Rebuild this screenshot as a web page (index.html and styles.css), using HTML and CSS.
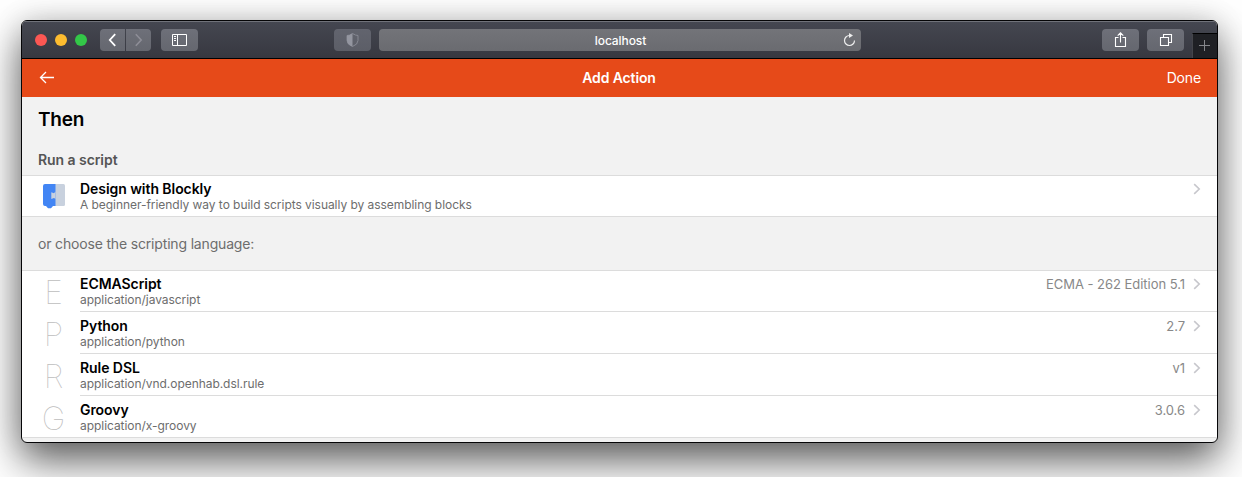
FILE: index.html
```html
<!DOCTYPE html>
<html lang="en">
<head>
<meta charset="utf-8">
<title>Add Action</title>
<link rel="stylesheet" href="styles.css">
</head>
<body>
<div class="window">
  <header class="toolbar">
    <div class="lights"><i class="light red"></i><i class="light yellow"></i><i class="light green"></i></div>
    <div class="nav-buttons">
      <span class="tool nav"><svg width="25" height="22" viewBox="0 0 25 22"><path d="M15.200 5.200 9.800 11l5.400 5.800" stroke="#fff" stroke-width="1.800"/></svg></span>
      <span class="tool nav forward"><svg width="25" height="22" viewBox="0 0 25 22"><path d="M9.800 5.200 15.200 11l-5.400 5.800" stroke="#8e8e97" stroke-width="1.600"/></svg></span>
    </div>
    <span class="tool sidebar"><svg width="37" height="22" viewBox="0 0 37 22"><path d="M11.500 5.500h14v11h-14zM16.500 5.500v11M13 7.500h2M13 9.500h2M13 11.500h2" stroke="#fff"/></svg></span>
    <span class="tool shield"><svg width="37" height="22" viewBox="0 0 37 22"><path d="M18.500 4.500q3 2 5.500 2v5q0 4-5.500 6-5.500-2-5.500-6v-5q2.500 0 5.500-2z" stroke="#868892"/><path d="M18.500 4.500v13q-5.500-2-5.500-6v-5q2.500 0 5.500-2z" fill="#9496a0"/></svg></span>
    <div class="address"><span class="host">localhost</span>
      <svg class="reload" width="14" height="14" viewBox="0 0 14 14"><path d="M6.500 2.500a5 5 0 1 0 5 5" stroke="#eee" stroke-width="1.200"/><path d="M6 0v5l4-2.500z" fill="#eee"/></svg>
    </div>
    <span class="tool share"><svg width="37" height="22" viewBox="0 0 37 22"><path d="M16.500 8.500h-3v9h10v-9h-3M18.500 13.500V4M15.700 6.700l2.800-2.900 2.800 2.900" stroke="#fff" stroke-width="1.100"/></svg></span>
    <span class="tool tabs"><svg width="37" height="22" viewBox="0 0 37 22"><path d="M13.500 8.500h8v8h-8zM16.500 8.500v-3h8v8h-3" stroke="#fff" stroke-width="1.100"/></svg></span>
    <span class="new-tab"><svg width="24" height="24" viewBox="0 0 24 24"><path d="M11.500 6v11M6 11.500h11" stroke="#85868a"/></svg></span>
  </header>
  <nav class="navbar">
    <svg class="back" width="17" height="14" viewBox="0 0 17 14"><path d="M16 6.500H3M8 1 2.500 6.500 8 12" stroke="#fff" stroke-width="1.300"/></svg>
    <span class="page-title">Add Action</span>
    <span class="done">Done</span>
  </nav>
  <main class="content">
    <h1 class="heading">Then</h1>
    <h2 class="block-title">Run a script</h2>
    <ul class="list">
      <li class="item">
        <span class="media"><svg class="blockly" width="22" height="25" viewBox="0 0 22 25"><path d="M12 0h8.500Q22 0 22 1.500v19q0 1.500-1.500 1.500H12z" fill="#c8d1de"/><path d="M2 0H12.500v22H10l-2 2.200H5L3 22H2Q0 22 0 20V2Q0 0 2 0z" fill="#4285f4"/><path d="M12.500 7.500v7.500l-1.500-1-2.700 1V8.300l2.700 1z" fill="#c8d1de"/></svg></span>
        <div class="inner"><div class="text"><div class="title">Design with Blockly</div><div class="sub">A beginner-friendly way to build scripts visually by assembling blocks</div></div><span class="after"></span><svg class="chev" width="8" height="12" viewBox="0 0 8 12"><path d="m1.200 1.200 5 4.800-5 4.800"/></svg></div>
      </li>
    </ul>
    <p class="note">or choose the scripting language:</p>
    <ul class="list languages">
      <li class="item">
        <span class="media letter">E</span>
        <div class="inner"><div class="text"><div class="title">ECMAScript</div><div class="sub">application/javascript</div></div><span class="after">ECMA - 262 Edition 5.1</span><svg class="chev" width="8" height="12" viewBox="0 0 8 12"><path d="m1.200 1.200 5 4.800-5 4.800"/></svg></div>
      </li>
      <li class="item">
        <span class="media letter">P</span>
        <div class="inner"><div class="text"><div class="title">Python</div><div class="sub">application/python</div></div><span class="after">2.7</span><svg class="chev" width="8" height="12" viewBox="0 0 8 12"><path d="m1.200 1.200 5 4.800-5 4.800"/></svg></div>
      </li>
      <li class="item">
        <span class="media letter">R</span>
        <div class="inner"><div class="text"><div class="title">Rule DSL</div><div class="sub">application/vnd.openhab.dsl.rule</div></div><span class="after">v1</span><svg class="chev" width="8" height="12" viewBox="0 0 8 12"><path d="m1.200 1.200 5 4.800-5 4.800"/></svg></div>
      </li>
      <li class="item">
        <span class="media letter">G</span>
        <div class="inner"><div class="text"><div class="title">Groovy</div><div class="sub">application/x-groovy</div></div><span class="after">3.0.6</span><svg class="chev" width="8" height="12" viewBox="0 0 8 12"><path d="m1.200 1.200 5 4.800-5 4.800"/></svg></div>
      </li>
    </ul>
  </main>
</div>
</body>
</html>
```
FILE: styles.css
```css
* { box-sizing: border-box; }
html { background: #fff; }
body { margin: 0; padding: 20px 24px 34px 21px; height: 477px; overflow: hidden; font-family: Inter, "Liberation Sans", sans-serif; }
svg { display: block; fill: none; flex: none; }
.window { width: 1197px; height: 423px; border: 1px solid #050507; border-radius: 6px; overflow: hidden; background: #f2f2f2; box-shadow: 0 18px 40px rgba(0,0,0,.62), 0 0 30px rgba(0,0,0,.12); }
.toolbar { height: 38px; display: flex; align-items: flex-start; padding: 8px 0 0 13px; background: linear-gradient(#454751, #373840); border-bottom: 1px solid #000; box-shadow: inset 0 1px #70727a; }
.lights { display: flex; gap: 8px; padding-top: 5px; width: 65px; }
.light { width: 12px; height: 12px; border-radius: 50%; }
.red { background: #fc5753; }
.yellow { background: #fdbc2f; }
.green { background: #33c748; }
.nav-buttons { display: flex; gap: 1px; }
.tool { height: 22px; width: 37px; border-radius: 4px; background: linear-gradient(#6e7079, #65676f); flex: none; }
.nav { width: 25px; border-radius: 4px 0 0 4px; }
.forward { border-radius: 0 4px 4px 0; }
.sidebar { margin-left: 10px; }
.shield { margin-left: 136px; background: linear-gradient(#62646e, #5c5e67); }
.address { margin-left: 8px; width: 482px; height: 22px; border-radius: 4px; background: linear-gradient(#737479, #6a6b70); display: grid; grid-template-columns: 18px 1fr 18px; align-items: center; }
.host { grid-column: 2; padding: 2px 0 0 1px; text-align: center; color: #fff; font-size: 12px; font-weight: 500; line-height: 20px; letter-spacing: -.1px; }
.share { margin-left: 241px; }
.tabs { margin-left: 8px; }
.new-tab { width: 25px; height: 25px; margin: 4px 0 0 8px; background: #1f2024; border-top: 1px solid #000; border-left: 1px solid #44454a; }
.navbar { height: 38px; display: grid; grid-template-columns: 60px 1fr 60px; align-items: center; padding: 0 16px; background: #e64a19; color: #fff; font-size: 14px; }
.page-title { padding: 0 1px 2px 0; text-align: center; font-weight: 600; letter-spacing: -.12px; }
.done { padding-bottom: 2px; text-align: right; letter-spacing: -.15px; }
.content { height: 346px; overflow: hidden; }
.heading { margin: 0; padding: 10px 16px 0; height: 45px; font-size: 19px; line-height: 26px; font-weight: 600; letter-spacing: -.2px; color: #000; }
.block-title { margin: 0; padding: 10px 16px 0; height: 33px; font-size: 14px; line-height: 16px; font-weight: 600; letter-spacing: -.06px; color: #555; }
.list { margin: 0; padding: 0; list-style: none; background: #fff; border-top: 1px solid #dcdcdc; border-bottom: 1px solid #dcdcdc; }
.item { display: flex; height: 42px; padding-top: 1px; }
.item:first-child { height: 40px; padding-top: 0; }
.languages .item:first-child, .item:last-child:not(:first-child) { height: 41px; }
.media { width: 58px; flex: none; padding: 8px 0 0 21px; }
.letter { padding: 0; padding-left: 5px; text-align: center; font-size: 32px; line-height: 43px; font-weight: 100; color: #bdbdbd; }
.inner { flex: 1; display: flex; align-items: flex-start; padding-right: 16px; border-bottom: 1px solid #dcdcdc; }
.item:last-child .inner { border-bottom: 0; }
.text { flex: 1; padding-top: 4px; }
.title { font-size: 14px; line-height: 17px; font-weight: 600; letter-spacing: -.06px; color: #000; }
.sub { padding-top: 1px; font-size: 12px; line-height: 14px; letter-spacing: -.05px; color: #6d6d6d; }
.after { padding-top: 5px; font-size: 13px; line-height: 17px; letter-spacing: -.04px; color: #888; }
.chev { margin: 7px 0 0 8px; stroke: #c7c7cc; stroke-width: 1.600; }
.note { margin: 0; padding: 18px 16px 0; height: 53px; font-size: 14px; line-height: 17px; letter-spacing: -.17px; color: #6d6d6d; }
```
